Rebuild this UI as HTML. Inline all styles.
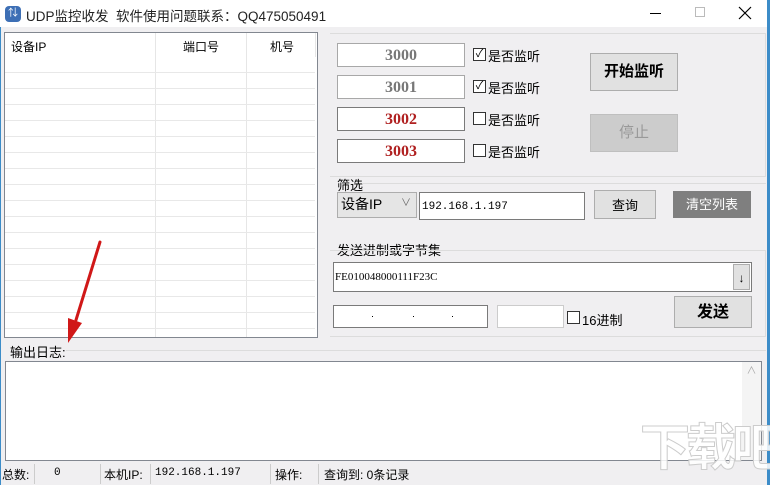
<!DOCTYPE html>
<html><head><meta charset="utf-8"><style>
*{box-sizing:border-box;margin:0;padding:0}
html,body{width:770px;height:485px;overflow:hidden}
body{background:#f0eff1;font-family:"Liberation Sans","Noto Sans CJK SC",sans-serif;font-size:12px;color:#000;position:relative}
.a{position:absolute;white-space:nowrap}
.tb{left:0;top:0;width:770px;height:27px;background:#fff}
.inp{background:#fff;border:1px solid #a8a8a8}
.num{font-family:"Liberation Serif","Noto Serif CJK SC",serif;font-size:16px;font-weight:bold;text-align:center;line-height:23px;color:#777}
.red{color:#b02020}
.dark{border-color:#7a7a7a}
.cb{width:13px;height:13px;border:1px solid #333;background:#fff;font-size:11px;line-height:11px;text-align:center}
.lbl{font-size:13px}
.btn{background:#e1e1e1;border:1px solid #adadad;text-align:center}
.sep{background:#dcdcdc;height:1px}
</style></head><body>
<div class="a tb"></div>
<div class="a" style="left:5px;top:6px;width:16px;height:16px;border-radius:4px;background:#3d6fb5;color:#fff;font-size:10px;line-height:16px;text-align:center">⇅</div>
<div class="a" style="left:26px;top:5px;font-size:13.5px;color:#222">UDP监控收发&nbsp; 软件使用问题联系：QQ475050491</div>
<div class="a" style="left:650px;top:13px;width:11px;height:1px;background:#000"></div>
<div class="a" style="left:695px;top:7px;width:10px;height:10px;border:1px solid #bbb"></div>
<svg class="a" style="left:738px;top:6px" width="14" height="14"><path d="M1 1L13 13M13 1L1 13" stroke="#000" stroke-width="1.2"/></svg>
<div class="a" style="left:767px;top:0;width:3px;height:485px;background:#3c8cc8"></div>
<div class="a" style="left:0;top:27px;width:1px;height:458px;background:#3c8cc8"></div>

<!-- list -->
<div class="a" style="left:4px;top:32px;width:314px;height:306px;background:#fff;border:1px solid #828790"></div>
<div class="a" style="left:11px;top:38px">设备IP</div>
<div class="a" style="left:183px;top:38px">端口号</div>
<div class="a" style="left:270px;top:38px">机号</div>
<div class="a" style="left:155px;top:33px;width:1px;height:304px;background:#e6e6e6"></div>
<div class="a" style="left:246px;top:33px;width:1px;height:304px;background:#e6e6e6"></div>
<div class="a" style="left:315px;top:33px;width:1px;height:24px;background:#e6e6e6"></div>
<div class="a" style="left:5px;top:72px;width:310px;height:257px;background:repeating-linear-gradient(#e8e8e8 0 1px,transparent 1px 16px)"></div>

<!-- group 1 -->
<div class="a" style="left:330px;top:33px;width:436px;height:144px;border:1px solid #dcdcdc;border-left:none"></div>
<div class="a inp num" style="left:337px;top:43px;width:128px;height:24px">3000</div>
<div class="a inp num" style="left:337px;top:75px;width:128px;height:24px">3001</div>
<div class="a inp num red dark" style="left:337px;top:107px;width:128px;height:24px">3002</div>
<div class="a inp num red dark" style="left:337px;top:139px;width:128px;height:24px">3003</div>
<div class="a cb" style="left:473px;top:48px">✓</div><div class="a lbl" style="left:488px;top:46px">是否监听</div>
<div class="a cb" style="left:473px;top:80px">✓</div><div class="a lbl" style="left:488px;top:78px">是否监听</div>
<div class="a cb" style="left:473px;top:112px"></div><div class="a lbl" style="left:488px;top:110px">是否监听</div>
<div class="a cb" style="left:473px;top:144px"></div><div class="a lbl" style="left:488px;top:142px">是否监听</div>
<div class="a btn" style="left:590px;top:53px;width:88px;height:38px;line-height:36px;font-size:15px;font-weight:bold">开始监听</div>
<div class="a btn" style="left:590px;top:114px;width:88px;height:38px;line-height:36px;font-size:15px;color:#999;background:#ccc;border-color:#bfbfbf">停止</div>

<!-- filter -->
<div class="a lbl" style="left:337px;top:175px">筛选</div>
<div class="a sep" style="left:362px;top:183px;width:404px"></div>
<div class="a" style="left:337px;top:192px;width:80px;height:26px;background:#e5e5e5;border:1px solid #adadad;font-size:14px;line-height:22px;padding-left:3px">设备IP<span style="position:absolute;right:5px;top:0;font-size:10px;color:#666">∨</span></div>
<div class="a inp dark" style="left:419px;top:192px;width:166px;height:28px;line-height:28px;padding-left:2px;font-family:'Liberation Mono',monospace;font-size:11px">192.168.1.197</div>
<div class="a btn" style="left:594px;top:190px;width:62px;height:29px;line-height:30px;font-size:13px">查询</div>
<div class="a" style="left:673px;top:191px;width:78px;height:27px;background:#7f7f7f;color:#fff;text-align:center;line-height:27px;font-size:13px">清空列表</div>

<!-- send -->
<div class="a lbl" style="left:337px;top:240px">发送进制或字节集</div>
<div class="a" style="left:330px;top:250px;width:436px;height:87px;border:1px solid #dcdcdc;border-left:none"></div>
<div class="a inp dark" style="left:333px;top:262px;width:419px;height:30px;line-height:28px;padding-left:1px;font-family:'Liberation Serif',serif;font-size:11px">FE010048000111F23C</div>
<div class="a btn" style="left:733px;top:264px;width:17px;height:26px;line-height:26px;font-size:12px">↓</div>
<div class="a inp dark" style="left:333px;top:305px;width:155px;height:23px"></div>
<div class="a" style="left:372px;top:316px;width:1px;height:1px;background:#000"></div>
<div class="a" style="left:413px;top:316px;width:1px;height:1px;background:#000"></div>
<div class="a" style="left:452px;top:316px;width:1px;height:1px;background:#000"></div>
<div class="a inp" style="left:497px;top:305px;width:67px;height:23px;border-color:#ccc"></div>
<div class="a cb" style="left:567px;top:311px"></div><div class="a lbl" style="left:582px;top:310px">16进制</div>
<div class="a btn" style="left:674px;top:296px;width:78px;height:32px;line-height:32px;font-size:16px;font-weight:bold">发送</div>

<!-- log -->
<div class="a lbl" style="left:10px;top:342px">输出日志:</div>
<div class="a sep" style="left:66px;top:350px;width:700px"></div>
<div class="a" style="left:5px;top:361px;width:757px;height:100px;background:#fff;border:1px solid #828790"></div>
<div class="a" style="left:742px;top:362px;width:19px;height:98px;background:#f4f4f4;color:#aaa;font-size:10px;text-align:center">∧</div>

<!-- status -->
<div class="a" style="left:2px;top:466px">总数:</div>
<div class="a" style="left:54px;top:467px;font-family:'Liberation Mono',monospace;font-size:11px">0</div>
<div class="a" style="left:104px;top:466px">本机IP:</div>
<div class="a" style="left:155px;top:467px;font-family:'Liberation Mono',monospace;font-size:11px">192.168.1.197</div>
<div class="a" style="left:275px;top:466px">操作:</div>
<div class="a" style="left:324px;top:466px">查询到: 0条记录</div>
<div class="a" style="left:34px;top:464px;width:1px;height:20px;background:#ccc"></div>
<div class="a" style="left:100px;top:464px;width:1px;height:20px;background:#ccc"></div>
<div class="a" style="left:150px;top:464px;width:1px;height:20px;background:#ccc"></div>
<div class="a" style="left:270px;top:464px;width:1px;height:20px;background:#ccc"></div>
<div class="a" style="left:318px;top:464px;width:1px;height:20px;background:#ccc"></div>

<!-- watermark -->
<div class="a" style="left:640px;top:418px;font-size:50px;font-weight:bold;color:rgba(255,255,255,.85);-webkit-text-stroke:1px #ccc;letter-spacing:-4px;line-height:60px">下载吧</div>

<!-- arrow -->
<svg class="a" style="left:0;top:0" width="330" height="360"><path d="M100 242L76 320" stroke="#d01818" stroke-width="3" stroke-linecap="round"/><path d="M68 343L68 318L82 323Z" fill="#d01818"/></svg>
</body></html>
